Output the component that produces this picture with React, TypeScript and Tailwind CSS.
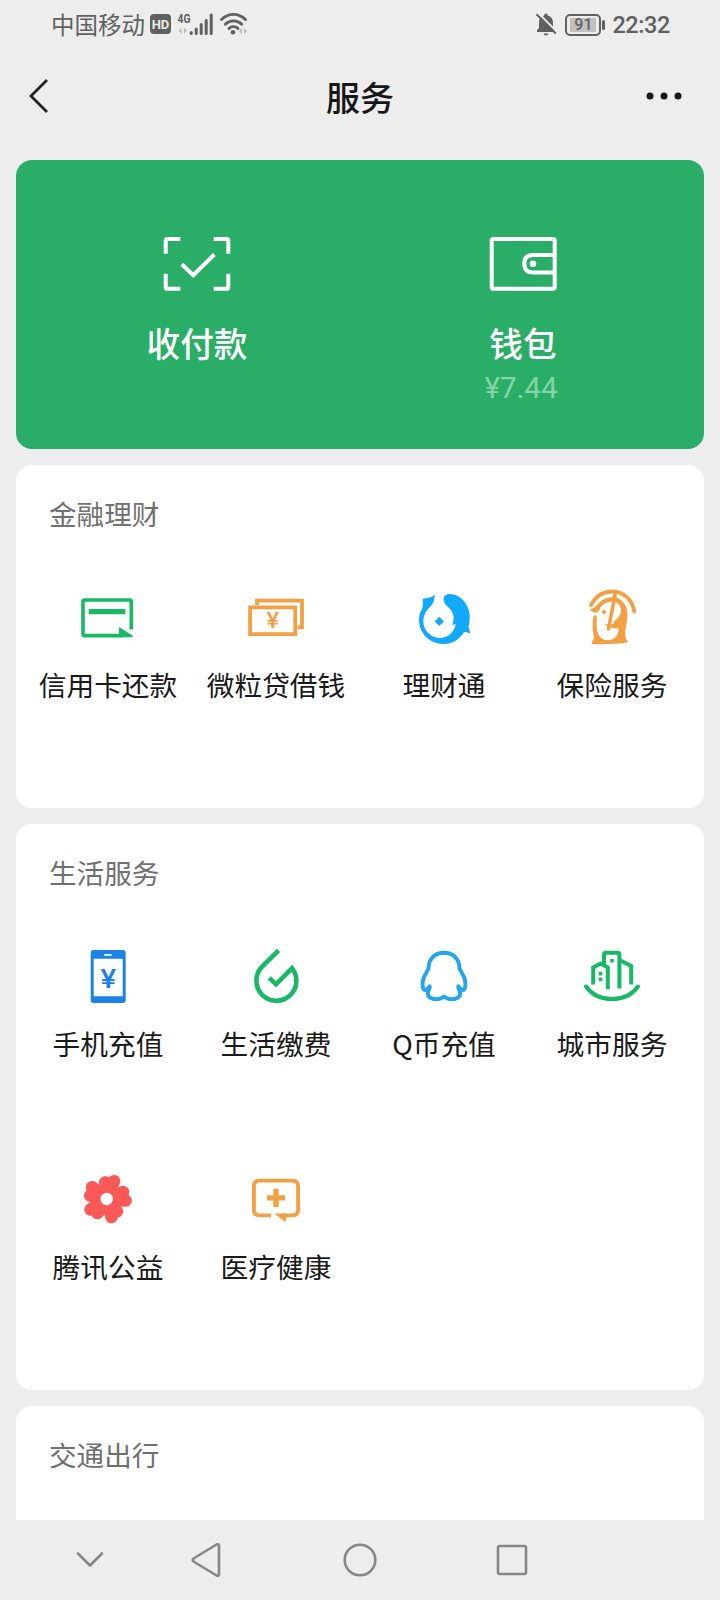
import type { ReactNode } from 'react';

type Service = {
  label: string;
  icon: ReactNode;
};

const GREEN = '#17b964';
const ORANGE = '#f2a044';
const BLUE = '#1c82e6';

const CreditCardIcon = () => (
  <>
    <path
      d="M53.3 42.4V14.5Q53.3 13 51.8 13H6.5Q5 13 5 14.5V47Q5 48.6 6.5 48.6H44"
      fill="none"
      stroke={GREEN}
      strokeWidth="3.6"
    />
    <path d="M10.7 22H47.3V27.2H10.7ZM41 40L55 48.8Q55 50.3 53.5 50.3H41Z" fill={GREEN} />
  </>
);

const LoanIcon = () => (
  <>
    <path
      d="M11 18V13.7H56V40.4H51.5M4.1 20.4H49.2V47.2H4.1Z"
      fill="none"
      stroke={ORANGE}
      strokeWidth="3.8"
    />
    <text
      x="20.5"
      y="41.2"
      textLength="12.6"
      lengthAdjust="spacingAndGlyphs"
      fill={ORANGE}
      className="font-[Roboto,sans-serif] text-[22px] font-medium"
    >
      ¥
    </text>
  </>
);

const WealthIcon = () => (
  <>
    <path
      d="M21.5 7.7C17 10.8 13 11 8.8 11.7C8.6 15 9.2 18 8.3 21.5C6 25 5 28 5 32.5C5 47 16 57 30 57C38 57 45 53 50 45.3C52 44.5 54 45 56.3 47C56.3 44.500 55 42.5 54.5 40C55.6 36 56 31 55.5 26C53 14 45 7 34.5 7C30.5 7.5 28.7 11 30 14C31 18 34 19.5 36.5 22.5C40 27 40.5 32 38.3 37.5Q40 38 41.7 36.8C41 42 38.5 46 34.5 48.5C29 52 21.5 51.5 16.5 48C9 42.5 7.5 33 11.5 25.5C14 21 18.7 18.5 19.8 14C20.2 11.5 20.5 10 21.5 7.7Z"
      fill="#12a8fc"
    />
    <path d="M25.3 29.8L29.9 34.4L25.3 39L20.7 34.4Z" fill="#12a8fc" />
  </>
);

const InsuranceIcon = () => (
  <>
    <path
      d="M9 18C14 9 21 4.5 30 4.5C42 4.5 50.5 13 52.2 24.5"
      fill="none"
      stroke={ORANGE}
      strokeWidth="3.8"
      strokeLinecap="round"
    />
    <path
      d="M7.5 22.5C12 22 14 18.5 17.5 15.5C21 12.2 26 10.3 31 10C39 10 45.5 18 45.5 27C45.5 36 43.2 41 43.2 47C43.2 50.5 44.5 53 46 55C40 57.3 15 57.5 9.5 57C10 54 12 52.5 12 50C10.3 44 10.3 36 11.3 29.5Q13 27 15 29.5L14.5 26C11.5 25.5 9 24.5 7.5 22.5Z"
      fill={ORANGE}
    />
    <path
      d="M17 24C18.5 18 24 14.5 31 14.5C36.5 15.5 39.8 20 38.8 25.5C37.5 30 34.500 32.5 31.5 35V37L36.5 41.5C37 48 32.5 53.3 26 53.3C18.5 53.3 14.7 47 14.7 39V28.5L12.5 27.5L14.5 25.5Z"
      fill="#fff"
    />
    <path d="M33.5 5L26.500 42" stroke={ORANGE} strokeWidth="3.6" strokeLinecap="round" />
    <path d="M21 36.3Q27 39 37 35.5V41.5Q27 41.5 21 36.3Z" fill={ORANGE} />
    <circle cx="22" cy="25" r="2.1" fill={ORANGE} />
  </>
);

const PhoneIcon = () => (
  <>
    <rect x="12.7" y="4" width="35" height="53" rx="3" fill={BLUE} />
    <path d="M15.7 12.7H44.7V50.2H15.7Z" fill="#fff" />
    <rect x="26" y="8" width="7.7" height="1.8" rx="0.9" fill="#fff" />
    <text
      x="22.4"
      y="42"
      textLength="15.6"
      lengthAdjust="spacingAndGlyphs"
      fill={BLUE}
      className="font-[Roboto,sans-serif] text-[25px] font-medium"
    >
      ¥
    </text>
  </>
);

const UtilitiesIcon = () => (
  <path
    d="M32.5 4.3L15.9 20.9A20 20 0 1 0 46 22.2L30 38.3L23.2 31.8"
    fill="none"
    stroke={GREEN}
    strokeWidth="4.6"
  />
);

const QCoinIcon = () => (
  <path
    d="M30 6.8C20.5 6.8 14.7 13 14.5 22C14.3 25 9.2 29 8.7 36C8.3 40.5 9.2 44 11 44C13 44 14.2 42 15.8 40.3C16 43 13.5 45 13.8 48C14.2 52 19 53.2 23 53.2C27 53.2 28.5 50.8 30 50.8C31.5 50.8 33 53.2 37 53.2C41 53.2 45.8 52 46.2 48C46.5 45 44 43 44.2 40.3C45.8 42 47 44 49 44C50.8 44 51.7 40.5 51.3 36C50.8 29 45.7 25 45.5 22C45.3 13 39.5 6.8 30 6.8Z"
    fill="none"
    stroke="#22a6ec"
    strokeWidth="3.9"
    strokeLinejoin="round"
  />
);

const CityIcon = () => (
  <>
    <g fill="none" stroke={GREEN} strokeWidth="4">
      <path d="M4 40.5C10 49 19 53 30 53C41 53 50 49 56 40.5" strokeLinecap="round" />
      <path d="M11.2 38.5V21.5L18.7 17.6L25.8 21.5V43.2" />
      <path d="M22 18.5V8.5Q22 6.8 23.7 6.8H35.7Q37.4 6.8 37.4 8.5V42.5" />
      <path d="M38 14.3L49.2 20V38.5" />
    </g>
    <path
      d="M16.7 26H20.3V29.6H16.7ZM16.7 31.6H20.3V35.2H16.7ZM28.2 13H31.8V16.6H28.2Z"
      fill={GREEN}
    />
  </>
);

// two round lobes per petal, each joined to the middle by a thick line
const lobes = [
  [27.2, 13.5],
  [36, 12.2],
  [45, 23],
  [47.6, 31.5],
  [39, 42.3],
  [33.5, 48],
  [19.5, 44],
  [12.6, 40.5],
  [12.3, 26.5],
  [14, 18.2],
];

const CharityIcon = () => (
  <>
    {lobes.map(([x, y]) => (
      <path
        key={`${x}-${y}`}
        d={`M28.7 30L${x} ${y}`}
        stroke="#fb5858"
        strokeWidth="12.6"
        strokeLinecap="round"
      />
    ))}
    <circle cx="28.7" cy="30" r="6.2" fill="#fff" />
  </>
);

const HealthIcon = () => (
  <>
    <path
      d="M25 46.4H13.5Q7.9 46.4 7.9 40.8V17.2Q7.9 11.6 13.5 11.6H46.5Q52.1 11.6 52.1 17.2V40.8Q52.1 46.4 46.5 46.4H36"
      fill="none"
      stroke={ORANGE}
      strokeWidth="3.9"
    />
    <path d="M28.5 44.6H40.5V48L39.3 53.3Z" fill={ORANGE} />
    <path d="M30 19.7V38M21 28.9H39" stroke={ORANGE} strokeWidth="5.4" />
  </>
);

const finance: Service[] = [
  { label: '信用卡还款', icon: <CreditCardIcon /> },
  { label: '微粒贷借钱', icon: <LoanIcon /> },
  { label: '理财通', icon: <WealthIcon /> },
  { label: '保险服务', icon: <InsuranceIcon /> },
];

const life: Service[] = [
  { label: '手机充值', icon: <PhoneIcon /> },
  { label: '生活缴费', icon: <UtilitiesIcon /> },
  { label: 'Q币充值', icon: <QCoinIcon /> },
  { label: '城市服务', icon: <CityIcon /> },
  { label: '腾讯公益', icon: <CharityIcon /> },
  { label: '医疗健康', icon: <HealthIcon /> },
];

const StatusBar = () => (
  <div className="flex h-[50px] shrink-0 items-center justify-between pr-[50px] pl-[51px] text-[#606060]">
    <div className="flex items-center">
      <span className="text-[23.5px] leading-none">中国移动</span>
      <span className="mb-0.5 ml-[5px] flex h-5 w-[21px] items-center justify-center rounded-[4px] bg-[#606060] font-[Roboto,sans-serif] text-[13px] leading-none font-bold text-[#ededed]">
        HD
      </span>
      <svg className="ml-1.5 overflow-visible" width="38" height="26" viewBox="0 0 38 26">
        <text
          x="0.5"
          y="11"
          textLength="13"
          lengthAdjust="spacingAndGlyphs"
          fill="#606060"
          className="font-[Roboto,sans-serif] text-[13.5px] font-bold"
        >
          4G
        </text>
        <path d="M4.5 15.5V22L1.5 18.8ZM7 22V15.5L10 18.8Z" fill="#bbb" />
        <path
          d="M14.2 20.5V21.5M19.2 17V21.5M24.2 12.5V21.5M29.2 8.5V21.5M34.2 3V21.5"
          stroke="#606060"
          strokeWidth="3"
          strokeLinecap="round"
        />
      </svg>
      <svg className="ml-1" width="30" height="26" viewBox="0 0 30 26">
        <g fill="none" stroke="#606060" strokeWidth="2.9" strokeLinecap="round">
          <path d="M2.5 7.5C9.5 0.7 19.5 0.7 26.5 7.5" />
          <path d="M6.3 12.2C11 7.7 18 7.7 22.7 12.2" />
          <path d="M10 16.5C12.5 14 16.5 14 19 16.5" />
        </g>
        <circle cx="14" cy="20.3" r="2.3" fill="#606060" />
        <path d="M23 16V22L20 19ZM25 22V16L28 19Z" fill="#bbb" />
      </svg>
    </div>
    <div className="flex items-center">
      <svg width="22" height="26" viewBox="0 0 22 26">
        <path
          d="M2 20V18L4 16V11C4 6.5 6 4.5 9 3.7Q9.5 1.5 11 1.5T13 3.7C16 4.5 18 6.5 18 11V16L20 18V20ZM8.5 21.5H13.5Q13 23.5 11 23.5T8.5 21.5Z"
          fill="#606060"
        />
        <path d="M3 0.8L22 19.8" stroke="#ededed" strokeWidth="2" />
        <path d="M1.5 2.3L20.8 21.6" stroke="#606060" strokeWidth="2" />
      </svg>
      <div className="ml-2 flex h-[22px] w-9 items-center justify-center rounded-[5px] border-2 border-[#606060] p-0.5">
        <div className="flex h-full w-[26px] items-center justify-center bg-[#c0c0c0] font-[Roboto,sans-serif] text-[16px] leading-none font-medium">
          91
        </div>
      </div>
      <div className="ml-px h-2.5 w-[3px] rounded-sm bg-[#606060]" />
      <span className="ml-[7px] pt-0.5 font-[Roboto,sans-serif] text-[23.5px] leading-none font-medium tracking-[-0.4px]">
        22:32
      </span>
    </div>
  </div>
);

const Header = () => (
  <header className="mb-[18px] flex h-[92px] shrink-0 items-center justify-between px-7">
    <svg width="48" height="36" viewBox="0 0 48 36">
      <path d="M19 2L3 18L19 34" fill="none" stroke="#222" strokeWidth="2.8" />
    </svg>
    <h1 className="pt-px text-[34px] leading-none font-medium text-[#161616]">服务</h1>
    <svg width="48" height="36" viewBox="0 0 48 36" fill="#161616">
      <circle cx="6" cy="18" r="3.5" />
      <circle cx="20" cy="18" r="3.5" />
      <circle cx="34" cy="18" r="3.5" />
    </svg>
  </header>
);

const PayCard = () => (
  <div className="mx-4 grid h-[289px] shrink-0 grid-cols-2 rounded-2xl bg-[#2aae67] px-[18px] pt-[76px] text-white">
    <div className="flex flex-col items-center">
      <svg width="68" height="56" viewBox="0 0 68 56" fill="none" stroke="#fff" strokeWidth="4">
        <path d="M2.7 17.7V4.5Q2.7 3 4.2 3H17.3M50.7 3H63.8Q65.3 3 65.3 4.5V17.7M65.3 37.8V51.2Q65.3 52.7 63.8 52.7H50.7M17.3 52.7H4.2Q2.7 52.7 2.7 51.2V37.8" />
        <path d="M18.8 28.3L30.3 39.2L51.3 18.5" />
      </svg>
      <span className="mt-[34px] text-[33.7px] leading-[34px] font-medium">收付款</span>
    </div>
    <div className="flex flex-col items-center">
      <svg width="68" height="56" viewBox="0 0 68 56" fill="none" stroke="#fff" strokeWidth="4">
        <rect x="2.7" y="3" width="63" height="49.7" rx="1.5" />
        <path d="M66 19H44Q35.3 19 35.3 27.7T44 36.4H66" />
        <circle cx="44" cy="27.8" r="3.3" fill="#fff" stroke="none" />
      </svg>
      <span className="mt-[34px] text-[33.7px] leading-[34px] font-medium">钱包</span>
      <span className="mt-[13px] mr-1 font-[Roboto,sans-serif] text-[29.5px] leading-[30px] text-[#86d3a8]">
        ¥7.44
      </span>
    </div>
  </div>
);

const Section = ({ title, items }: { title: string; items: Service[] }) => (
  <section className="mx-4 mt-4 min-h-[343px] shrink-0 rounded-2xl bg-white px-2">
    <h2 className="h-[122px] pt-[34px] pl-[25px] text-[27.6px] leading-[28px] text-[#707070]">
      {title}
    </h2>
    <div className="-mb-0.5 grid grid-cols-4">
      {items.map(({ label, icon }) => (
        <div key={label} className="flex h-[223px] flex-col items-center">
          <svg width="60" height="60" viewBox="0 0 60 60">
            {icon}
          </svg>
          <span className="mt-[23px] text-[27.7px] leading-[28px] whitespace-nowrap text-[#1a1a1a]">
            {label}
          </span>
        </div>
      ))}
    </div>
  </section>
);

const NavBar = () => (
  <nav className="flex h-20 shrink-0 items-center bg-[#ededed] pl-[74px]">
    <svg
      width="460"
      height="40"
      viewBox="0 0 460 40"
      fill="none"
      stroke="#868686"
      strokeWidth="2.6"
      strokeLinecap="round"
      strokeLinejoin="round"
    >
      <path d="M4 13.5L16 25.5L28 13.5" />
      <path d="M142.5 4.5Q145 3.5 145 6V34Q145 36.5 142.5 35.5L119.5 21.5Q118 20 119.5 18.5Z" />
      <circle cx="286" cy="20" r="15.3" />
      <rect x="424" y="6" width="28" height="28" rx="1.5" />
    </svg>
  </nav>
);

export default function App() {
  return (
    <div className="flex h-[1600px] w-[720px] flex-col overflow-hidden bg-[#ededed] font-['Noto_Sans_CJK_SC',sans-serif]">
      <StatusBar />
      <Header />
      <main className="flex min-h-0 flex-1 flex-col overflow-hidden">
        <PayCard />
        <Section title="金融理财" items={finance} />
        <Section title="生活服务" items={life} />
        <Section title="交通出行" items={[]} />
      </main>
      <NavBar />
    </div>
  );
}
